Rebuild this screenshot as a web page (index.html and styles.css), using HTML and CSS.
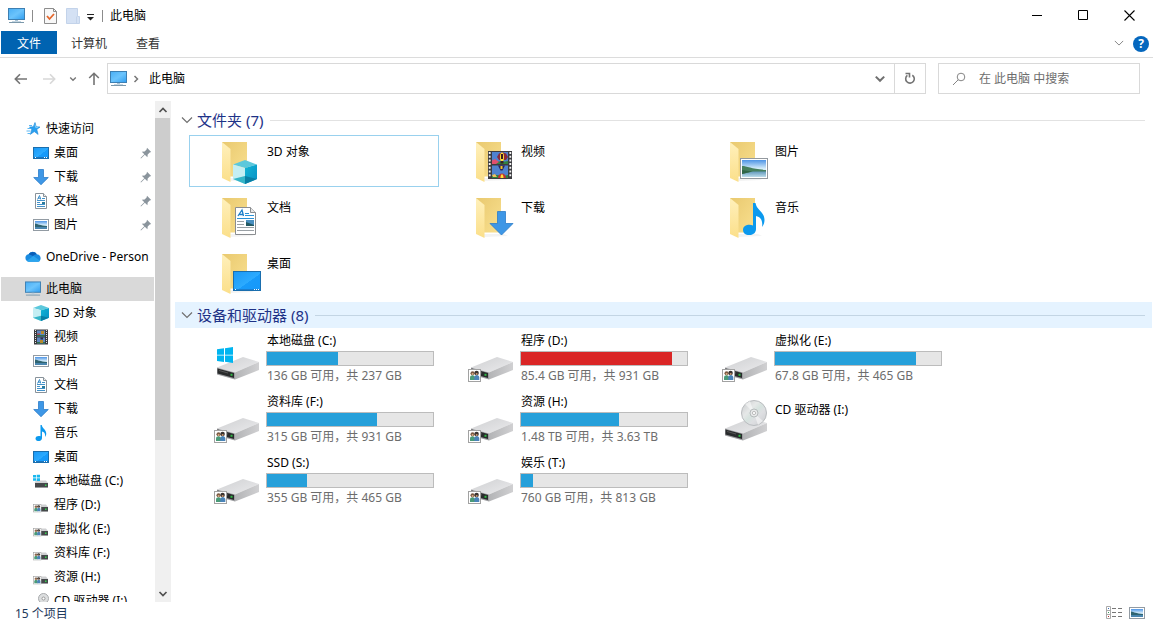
FILE: index.html
```html
<!DOCTYPE html>
<html lang="zh-CN">
<head>
<meta charset="utf-8">
<title>此电脑</title>
<link rel="stylesheet" href="styles.css">
</head>
<body>
<svg class="sprite" aria-hidden="true">
  <defs>
    <linearGradient id="gScreen" x1="0" y1="0" x2="1" y2="1"><stop offset="0" stop-color="#48aef5"/><stop offset=".5" stop-color="#6cc4fc"/><stop offset="1" stop-color="#2f9df0"/></linearGradient>
    <linearGradient id="gDesk" x1="0" y1="0" x2="1" y2="1"><stop offset="0" stop-color="#1a98f5"/><stop offset=".55" stop-color="#2cabff"/><stop offset=".56" stop-color="#189bfa"/><stop offset="1" stop-color="#1598fa"/></linearGradient>
    <linearGradient id="gBack" x1="0" y1="0" x2="1" y2="1"><stop offset="0" stop-color="#e9c96f"/><stop offset="1" stop-color="#f9e090"/></linearGradient>
    <linearGradient id="gFlap" x1="0" y1="0" x2="0" y2="1"><stop offset="0" stop-color="#fff0bb"/><stop offset="1" stop-color="#fbdf8a"/></linearGradient>
    <linearGradient id="gTop" x1="0" y1="0" x2="1" y2="1"><stop offset="0" stop-color="#cfd0d2"/><stop offset="1" stop-color="#ebebed"/></linearGradient>
    <linearGradient id="gSide" x1="0" y1="0" x2="1" y2="0"><stop offset="0" stop-color="#b3b4b6"/><stop offset="1" stop-color="#d0d0d2"/></linearGradient>
    <linearGradient id="gDisc" x1="0" y1="0" x2="1" y2="1"><stop offset="0" stop-color="#c6c8ca"/><stop offset=".35" stop-color="#e6e8e8"/><stop offset=".5" stop-color="#d6e2de"/><stop offset=".65" stop-color="#dedfe2"/><stop offset="1" stop-color="#c8cacd"/></linearGradient>
    <linearGradient id="gSky" x1="0" y1="0" x2="0" y2="1"><stop offset="0" stop-color="#4d94e6"/><stop offset=".5" stop-color="#d4ecfa"/><stop offset="1" stop-color="#e6f3f8"/></linearGradient>
    <linearGradient id="gWater" x1="0" y1="0" x2="0" y2="1"><stop offset="0" stop-color="#5a93b8"/><stop offset="1" stop-color="#bcdcea"/></linearGradient>
    <linearGradient id="gCubeR" x1="0" y1="0" x2="1" y2="1"><stop offset="0" stop-color="#12b5d5"/><stop offset="1" stop-color="#078fc4"/></linearGradient>
  </defs>

  <symbol id="pc" viewBox="0 0 17 16"><rect x=".5" y=".5" width="16" height="11" fill="url(#gScreen)" stroke="#3d7fb2"/><path d="M7 12h3v1H7z" fill="#a9c3d6"/><path d="M4 13h9v1H4z" fill="#c4d6e2"/><path d="M1 14.500h15" stroke="#7b98ab"/></symbol>
  <symbol id="star" viewBox="0 0 16 16"><path d="M10 1.500l1.200 4.300 3.800.2-3.200 2.400 1.300 5-3.800-2.800-4 2.800 1.500-4.700L4.500 6l3.800-.2z" fill="#2aa0f0" stroke="#1b86d6" stroke-width=".6"/><path d="M2.500 7.500h4M1.500 10h4M2.500 12.500h3M4 4.500h3" stroke="#4ab0f3" stroke-width=".9"/><path d="M10 3.500l.7 3 2.500.2" fill="none" stroke="#7fd0fb"/></symbol>
  <symbol id="desk" viewBox="0 0 16 16"><rect x=".5" y="2.500" width="15" height="11" fill="url(#gDesk)" stroke="#1a6eae"/><path d="M1 12.500h14" stroke="#1b75bd"/><path d="M2 12.500h1M11 12.500h1M13 12.500h1" stroke="#fff"/></symbol>
  <symbol id="down" viewBox="0 0 16 16"><path d="M5.500.5h5v8h4.800L8 15.700.7 8.500h4.800z" fill="#3e97e6" stroke="#2c7cc9" stroke-width=".8"/></symbol>
  <symbol id="doc" viewBox="0 0 16 16"><path d="M2.500.5h8l3 3v12h-11z" fill="#fff" stroke="#88929a"/><path d="M10.500.5v3h3" fill="#eee" stroke="#88929a"/><path d="M4.500 6.500l2-4 1.200 4M5 5.200h3M4 7.500h8M9 5.500h3M4 9.500h3M9 9.500h3M4 11.500h8M4 13.500h8" fill="none" stroke="#2e86c4" stroke-width=".9"/><path d="M9 9h3v2H9z" fill="#2a7a9a"/></symbol>
  <symbol id="pic" viewBox="0 0 16 16"><rect x=".5" y="2.500" width="15" height="11" fill="#fff" stroke="#929ba3"/><path d="M2 4h12v8H2z" fill="url(#gSky)"/><path d="M2 6.500c3 .5 5 2 12 2.500v1H2z" fill="#2f6471"/><path d="M2 10h12v2H2z" fill="#4985ae"/></symbol>
  <symbol id="cloud" viewBox="0 0 17 16"><path d="M4 13a4 4 0 0 1-.3-7.900A5 5 0 0 1 12.500 5c3 .3 4.500 2.500 4 5s-2 3-3.500 3z" fill="#1a8be0"/><path d="M4 5a5 5 0 0 1 8.500 0c-2 0-3 1-4 2L4 5z" fill="#0a5eb8"/><path d="M2 12l7-5 7 5c-.6.700-1.500 1-3 1H4c-.8 0-1.500-.4-2-1z" fill="#2ba5ee"/></symbol>
  <symbol id="cube" viewBox="0 0 24 24"><path d="M12 0l12 4.500L12 8 0 4.500z" fill="#5cc8dc"/><path d="M0 4.500L12 8v16L0 19z" fill="#c4eef3"/><path d="M24 4.500L12 8v16l12-5z" fill="url(#gCubeR)"/><path d="M0 19l12-3v8z" fill="#35b5c8"/><path d="M24 19l-12-3v8z" fill="#087fa5"/></symbol>
  <symbol id="film" viewBox="0 0 24 28"><path d="M0 0h24v28H0z" fill="#3c3c40"/><path d="M1.700 1v26M22.300 1v26" stroke="#f4f4f4" stroke-width="1.800" stroke-dasharray="2 1.700"/><path d="M4 1h16v12H4zM4 14.500h16V27H4z" fill="#4f82cf"/><path d="M4 11c5-2 9 1 16-1v3H4zM4 24c5-1 11 2 16 0v3H4z" fill="#308240"/><path d="M9 6l2-3.500 3.500-1.200L18 2.500 20 6l-2 3h-7z" fill="#8a2a3c"/><ellipse cx="14" cy="6" rx="2" ry="4.500" fill="#ffe038"/><path d="M13 3h2v5h-2z" fill="#3b1d20"/><path d="M12.500 10h3v2.500h-3z" fill="#392023"/><path d="M4 9.500l3-1.500 4 3-3 2H4z" fill="#e0506f"/><path d="M10 14.500h7l-2.500 5h-2z" fill="#2c225b"/><path d="M12.500 15h2v3h-2z" fill="#f2c622"/><path d="M10 27c0-6 8-6 8 0z" fill="#c23034"/><path d="M12.500 27c0-5 3-5 3 0z" fill="#ffe038"/><path d="M4 24l3-1 2 3H5z" fill="#f0c060"/></symbol>
  <symbol id="filmMini" viewBox="0 0 16 16"><path d="M1 .5h14v15H1z" fill="#3a3a3e"/><path d="M2.500 1v14M13.500 1v14" stroke="#e4e4e4" stroke-dasharray="1 1"/><path d="M4 1.500h8v6H4zM4 8.500h8v6H4z" fill="#5e86c0"/><path d="M4 6h8v1.500H4zM4 13h8v1.500H4z" fill="#2f6e50"/><path d="M8 2h3v3H8zM7 11h3v3H7z" fill="#b58a2b"/><path d="M4 4.500h3V6H4z" fill="#a84a50"/><path d="M7.500 8.500h2.500v2H7.500z" fill="#2d2c4e"/></symbol>
  <symbol id="music" viewBox="0 0 22 32"><path d="M10 0h2.500c1 7 9 9 9 17 0 3-1 5-2.500 7 1-6-1-10-6-11v13c0 8-13 8-13 1 0-5 6-6 10-4.500z" fill="#0b99ee"/></symbol>
  <symbol id="flag" viewBox="0 0 16 16"><path d="M0 2.300l7-1v6.400H0zM8 1.200L16 0v7.700H8zM0 8.600h7V15l-7-1zM8 8.600h8V16l-8-1.200z" fill="#00b5f0"/></symbol>
  <symbol id="people" viewBox="0 0 13 13"><rect x=".5" y=".5" width="12" height="12" fill="#fff" stroke="#a2a2a2"/><circle cx="4.600" cy="4.300" r="2.100" fill="#7a5a42"/><circle cx="8.600" cy="4" r="2.200" fill="#3a3330"/><circle cx="4.600" cy="5" r="1" fill="#d9ac88"/><circle cx="8.700" cy="5" r="1" fill="#c9966f"/><path d="M2 11V8.500c0-3 5-3 5 0V11z" fill="#4a9a78"/><path d="M6.300 11V8.500c0-3.500 5-3.500 5 0V11z" fill="#4a83b8"/></symbol>
  <symbol id="box" viewBox="0 0 48 48"><path d="M2 32.500L28 22l16 5-24 10.500z" fill="url(#gTop)"/><path d="M20 37.500L44 27v8L20 44.500z" fill="url(#gSide)"/><path d="M2 32.500l18 5v7L2 39.500z" fill="#9c9da0"/><path d="M2.500 33.500l16.500 4.600V43L2.500 38.400z" fill="#292b2c"/><path d="M4 35l9 2.400v1L4 36z" fill="#555"/><path d="M15.500 38.800h2v2h-2z" fill="#2fb944"/></symbol>
  <symbol id="mini" viewBox="0 0 16 16"><path d="M3 7.500h10l2 2.500H1.500z" fill="#cfd0d2"/><path d="M2 10h13v4H2z" fill="#45484a"/><path d="M2 14.500h13" stroke="#9a9c9e"/><path d="M12 11.500h1.500V13H12z" fill="#35d14f"/></symbol>

  <symbol id="miniC" viewBox="0 0 16 16"><use href="#mini" width="16" height="16"/><path d="M0 2h3v2.500H0zM3.700 1.700H7v2.800H3.700zM0 5.200h3v2.500H0zM3.700 5.200H7V8H3.700z" fill="#19b8ef"/></symbol>
  <symbol id="miniNet" viewBox="0 0 16 16"><use href="#mini" width="16" height="16"/><use href="#people" y="7" width="8.500" height="8.500"/></symbol>
  <symbol id="miniCd" viewBox="0 0 16 16"><use href="#mini" y="2" width="16" height="16"/><circle cx="10.500" cy="5.500" r="5" fill="#dcdedf" stroke="#a9abad"/><circle cx="10.500" cy="5.500" r="1.500" fill="#fff" stroke="#999"/></symbol>

  <symbol id="folder" viewBox="0 0 48 48"><path d="M15 44l-4-3h24l4 2z" fill="#f3f3f3"/><path d="M7 5h25v34.500H7z" fill="url(#gBack)"/><path d="M7 5l8.500 7v33L7 41z" fill="url(#gFlap)"/></symbol>
  <symbol id="f3d" viewBox="0 0 48 48"><use href="#folder" width="48" height="48"/><use href="#cube" x="18" y="23" width="24" height="24"/></symbol>
  <symbol id="fFilm" viewBox="0 0 48 48"><use href="#folder" width="48" height="48"/><use href="#film" x="19" y="14" width="24" height="28"/></symbol>
  <symbol id="fPic" viewBox="0 0 48 48"><use href="#folder" width="48" height="48"/><rect x="17.500" y="21.500" width="27" height="20" fill="#fff" stroke="#93999f"/><path d="M19 23h24v17H19z" fill="url(#gSky)"/><path d="M19 34h24v6H19z" fill="url(#gWater)"/><path d="M19 29c5 0 10 3 24 4v1.500H30L19 37z" fill="#46805f"/><path d="M19 33l10 1.500L19 37z" fill="#2f6547"/></symbol>
  <symbol id="fDoc" viewBox="0 0 48 48"><use href="#folder" width="48" height="48"/><path d="M20.500 14.500h15l5 5v22h-20z" fill="#fff" stroke="#8a8d90"/><path d="M35.500 14.500v5h5" fill="#e6e6e6" stroke="#8a8d90"/><path d="M23 23l4-6 1.500 6M24.500 21.500h4" fill="none" stroke="#1e7fc8" stroke-width="1.300"/><path d="M30 20.500h4M30 22.500h9M22 25.500h17" stroke="#2b92d6"/><path d="M22 28.500h7M22 31.500h7M22 34.500h17M22 37.500h17" stroke="#9aa0a5"/><path d="M31 27h8v6h-8z" fill="#4a8fc0"/><path d="M31 29l8 3v1h-8z" fill="#255a63"/></symbol>
  <symbol id="fDown" viewBox="0 0 48 48"><use href="#folder" width="48" height="48"/><path d="M28.500 18.500h8v12H44L32.500 42 21 30.500h7.500z" fill="#3e97e6" stroke="#2c7cc9" stroke-width=".8"/></symbol>
  <symbol id="fMusic" viewBox="0 0 48 48"><use href="#folder" width="48" height="48"/><use href="#music" x="20" y="10" width="22" height="32"/></symbol>
  <symbol id="fDesk" viewBox="0 0 48 48"><use href="#folder" width="48" height="48"/><rect x="18.500" y="22.500" width="27" height="19" fill="url(#gDesk)" stroke="#1a6eae"/><path d="M19 40.500h26" stroke="#1b7fd0"/><path d="M20 40.500h1M39 40.500h1M41 40.500h1M43 40.500h1" stroke="#fff"/></symbol>

  <symbol id="driveC" viewBox="0 0 48 48"><use href="#box" width="48" height="48"/><use href="#flag" x="2" y="12" width="16" height="16"/></symbol>
  <symbol id="driveNet" viewBox="-1 0 48 48"><use href="#box" width="48" height="48"/><use href="#people" x="-1" y="34" width="13" height="13"/></symbol>
  <symbol id="driveCd" viewBox="0 0 48 48"><use href="#box" width="48" height="48"/><circle cx="31" cy="17" r="12.500" fill="url(#gDisc)" stroke="#b9bcbf"/><path d="M31 17L22 8l5-3zM31 17l9 8-5 4z" fill="#fff" opacity=".5"/><circle cx="31" cy="17" r="4" fill="#e8eaea" stroke="#aaaeb0" stroke-width=".8"/><circle cx="31" cy="17" r="1.600" fill="#fff" stroke="#999" stroke-width=".6"/></symbol>

  <symbol id="pin" viewBox="0 0 12 12"><path d="M7 .8L11.200 5l-1.500.4-2 2-.3 2.800-2.600-2.500L1 11.500.5 11l3.800-3.800L1.800 4.700l2.800-.3 2-2z" fill="#8a949c"/></symbol>
  <symbol id="chevD" viewBox="0 0 12 12"><path d="M1 3.500l5 5 5-5" fill="none" stroke="currentColor" stroke-width="1.200"/></symbol>
  <symbol id="chevBold" viewBox="0 0 10 10"><path d="M1.500 3L5 6.500 8.500 3" fill="none" stroke="currentColor" stroke-width="1.700"/></symbol>
</svg>

<div class="window">
  <header class="titlebar">
    <svg class="i-pc" aria-hidden="true"><use href="#pc"/></svg>
    <span class="sep"></span>
    <button class="quick q-check" aria-label="属性"><svg width="13" height="16" viewBox="0 0 13 16"><path d="M.5.5h9l3 3v12H.5z" fill="#f8f8f8" stroke="#8d8d8d"/><path d="M9.500.5v3h3" fill="none" stroke="#8d8d8d"/><path d="M3 8l2.500 3 4.500-5" fill="none" stroke="#e4662b" stroke-width="1.800"/></svg></button>
    <button class="quick q-new" aria-label="新建文件夹"><svg width="14" height="16" viewBox="0 0 14 16"><path d="M.5.5h11v8h2v7H.5z" fill="#d4e1f4" stroke="#c3d3ea"/><path d="M10.500 8.500v7" stroke="#c3d3ea"/></svg></button>
    <button class="quick q-more" aria-label="自定义快速访问工具栏"><svg width="8" height="8" viewBox="0 0 8 8"><path d="M0 1.500h7" stroke="#222"/><path d="M0 4h7L3.500 7.500z" fill="#222"/></svg></button>
    <span class="sep"></span>
    <h1 class="title">此电脑</h1>
    <div class="controls">
      <button class="control" aria-label="最小化"><svg width="11" height="11" viewBox="0 0 11 11"><path d="M0 5.500h10" stroke="#000"/></svg></button>
      <button class="control" aria-label="最大化"><svg width="11" height="11" viewBox="0 0 11 11"><path d="M.5.5h9v9h-9z" fill="none" stroke="#000"/></svg></button>
      <button class="control" aria-label="关闭"><svg width="11" height="11" viewBox="0 0 11 11"><path d="M.5.5l10 10M10.500.5l-10 10" stroke="#000" stroke-width="1.100"/></svg></button>
    </div>
  </header>

  <nav class="ribbon">
    <button class="tab tab-file">文件</button>
    <button class="tab">计算机</button>
    <button class="tab">查看</button>
    <button class="expand" aria-label="展开功能区"><svg width="10" height="10"><use href="#chevD"/></svg></button>
    <button class="help" aria-label="帮助">?</button>
  </nav>

  <div class="addressbar">
    <div class="history">
      <button class="nav-btn" aria-label="后退"><svg width="13" height="12" viewBox="0 0 13 12"><path d="M13 6H1.500M6 1.200L1.300 6 6 10.800" fill="none" stroke="#747474" stroke-width="1.600"/></svg></button>
      <button class="nav-btn" aria-label="前进"><svg width="13" height="12" viewBox="0 0 13 12"><path d="M0 6h11.500M7 1.200L11.700 6 7 10.800" fill="none" stroke="#d8d8d8" stroke-width="1.600"/></svg></button>
      <button class="nav-btn nav-small" aria-label="最近浏览的位置"><svg width="8" height="8"><use href="#chevBold"/></svg></button>
      <button class="nav-btn nav-up" aria-label="向上"><svg width="12" height="13" viewBox="0 0 12 13"><path d="M6 13V1.500M1.200 6L6 1.300 10.800 6" fill="none" stroke="#747474" stroke-width="1.600"/></svg></button>
    </div>
    <div class="path">
      <svg class="i-pc" aria-hidden="true"><use href="#pc"/></svg>
      <svg class="crumb-arrow" width="6" height="8" viewBox="0 0 6 8" aria-hidden="true"><path d="M1.500 1l3 3-3 3" fill="none" stroke="#777" stroke-width="1.500"/></svg>
      <a class="crumb" href="#">此电脑</a>
      <button class="path-drop" aria-label="以前的位置"><svg width="12" height="12"><use href="#chevBold"/></svg></button>
      <button class="refresh" aria-label="刷新"><svg width="12" height="13" viewBox="0 0 12 13"><path d="M8.300 3.200a4.300 4.300 0 1 1-4.900.2" fill="none" stroke="#747474" stroke-width="1.600"/><path d="M1.500 1.500h4v4" fill="none" stroke="#747474" stroke-width="1.600"/></svg></button>
    </div>
    <label class="search">
      <svg width="14" height="14" viewBox="0 0 14 14" aria-hidden="true"><circle cx="9" cy="5" r="3.800" fill="none" stroke="#858585"/><path d="M6.200 7.800L1 13" stroke="#858585"/></svg>
      <input type="text" placeholder="在 此电脑 中搜索" aria-label="在 此电脑 中搜索">
    </label>
  </div>

  <div class="body">
    <nav class="tree">
      <ul class="branch">
        <li><a class="node" href="#"><svg class="ico"><use href="#star"/></svg>快速访问</a></li>
        <li><a class="node sub" href="#"><svg class="ico"><use href="#desk"/></svg>桌面<svg class="pin"><use href="#pin"/></svg></a></li>
        <li><a class="node sub" href="#"><svg class="ico"><use href="#down"/></svg>下载<svg class="pin"><use href="#pin"/></svg></a></li>
        <li><a class="node sub" href="#"><svg class="ico"><use href="#doc"/></svg>文档<svg class="pin"><use href="#pin"/></svg></a></li>
        <li><a class="node sub" href="#"><svg class="ico"><use href="#pic"/></svg>图片<svg class="pin"><use href="#pin"/></svg></a></li>
      </ul>
      <ul class="branch">
        <li><a class="node" href="#"><svg class="ico"><use href="#cloud"/></svg>OneDrive - Person</a></li>
      </ul>
      <ul class="branch">
        <li><a class="node selected" href="#"><svg class="ico"><use href="#pc"/></svg>此电脑</a></li>
        <li><a class="node sub" href="#"><svg class="ico"><use href="#cube"/></svg>3D 对象</a></li>
        <li><a class="node sub" href="#"><svg class="ico"><use href="#filmMini"/></svg>视频</a></li>
        <li><a class="node sub" href="#"><svg class="ico"><use href="#pic"/></svg>图片</a></li>
        <li><a class="node sub" href="#"><svg class="ico"><use href="#doc"/></svg>文档</a></li>
        <li><a class="node sub" href="#"><svg class="ico"><use href="#down"/></svg>下载</a></li>
        <li><a class="node sub" href="#"><svg class="ico"><use href="#music"/></svg>音乐</a></li>
        <li><a class="node sub" href="#"><svg class="ico"><use href="#desk"/></svg>桌面</a></li>
        <li><a class="node sub" href="#"><svg class="ico"><use href="#miniC"/></svg>本地磁盘 (C:)</a></li>
        <li><a class="node sub" href="#"><svg class="ico"><use href="#miniNet"/></svg>程序 (D:)</a></li>
        <li><a class="node sub" href="#"><svg class="ico"><use href="#miniNet"/></svg>虚拟化 (E:)</a></li>
        <li><a class="node sub" href="#"><svg class="ico"><use href="#miniNet"/></svg>资料库 (F:)</a></li>
        <li><a class="node sub" href="#"><svg class="ico"><use href="#miniNet"/></svg>资源 (H:)</a></li>
        <li><a class="node sub" href="#"><svg class="ico"><use href="#miniCd"/></svg>CD 驱动器 (I:)</a></li>
      </ul>
    </nav>
    <div class="scroll">
      <button class="scroll-btn scroll-up" aria-label="向上滚动"><svg width="10" height="10"><use href="#chevBold"/></svg></button>
      <div class="track"><div class="thumb"></div></div>
      <button class="scroll-btn" aria-label="向下滚动"><svg width="10" height="10"><use href="#chevBold"/></svg></button>
    </div>

    <main class="content">
      <section>
        <h2 class="group"><svg width="12" height="12"><use href="#chevD"/></svg>文件夹 (7)</h2>
        <div class="grid folders">
          <a class="item focused" href="#"><svg class="big"><use href="#f3d"/></svg><span class="name">3D 对象</span></a>
          <a class="item" href="#"><svg class="big"><use href="#fFilm"/></svg><span class="name">视频</span></a>
          <a class="item" href="#"><svg class="big"><use href="#fPic"/></svg><span class="name">图片</span></a>
          <a class="item" href="#"><svg class="big"><use href="#fDoc"/></svg><span class="name">文档</span></a>
          <a class="item" href="#"><svg class="big"><use href="#fDown"/></svg><span class="name">下载</span></a>
          <a class="item" href="#"><svg class="big"><use href="#fMusic"/></svg><span class="name">音乐</span></a>
          <a class="item" href="#"><svg class="big"><use href="#fDesk"/></svg><span class="name">桌面</span></a>
        </div>
      </section>
      <section>
        <h2 class="group hover"><svg width="12" height="12"><use href="#chevD"/></svg>设备和驱动器 (8)</h2>
        <div class="grid drives">
          <a class="item" href="#"><svg class="big"><use href="#driveC"/></svg><span class="info"><span>本地磁盘 (C:)</span><span class="bar"><span class="fill" style="width:43%"></span></span><span class="space">136 GB 可用，共 237 GB</span></span></a>
          <a class="item" href="#"><svg class="big net"><use href="#driveNet"/></svg><span class="info"><span>程序 (D:)</span><span class="bar"><span class="fill full" style="width:91%"></span></span><span class="space">85.4 GB 可用，共 931 GB</span></span></a>
          <a class="item" href="#"><svg class="big net"><use href="#driveNet"/></svg><span class="info"><span>虚拟化 (E:)</span><span class="bar"><span class="fill" style="width:85%"></span></span><span class="space">67.8 GB 可用，共 465 GB</span></span></a>
          <a class="item" href="#"><svg class="big net"><use href="#driveNet"/></svg><span class="info"><span>资料库 (F:)</span><span class="bar"><span class="fill" style="width:66%"></span></span><span class="space">315 GB 可用，共 931 GB</span></span></a>
          <a class="item" href="#"><svg class="big net"><use href="#driveNet"/></svg><span class="info"><span>资源 (H:)</span><span class="bar"><span class="fill" style="width:59%"></span></span><span class="space">1.48 TB 可用，共 3.63 TB</span></span></a>
          <a class="item" href="#"><svg class="big"><use href="#driveCd"/></svg><span class="name">CD 驱动器 (I:)</span></a>
          <a class="item" href="#"><svg class="big net"><use href="#driveNet"/></svg><span class="info"><span>SSD (S:)</span><span class="bar"><span class="fill" style="width:24%"></span></span><span class="space">355 GB 可用，共 465 GB</span></span></a>
          <a class="item" href="#"><svg class="big net"><use href="#driveNet"/></svg><span class="info"><span>娱乐 (T:)</span><span class="bar"><span class="fill" style="width:7%"></span></span><span class="space">760 GB 可用，共 813 GB</span></span></a>
        </div>
      </section>
    </main>
  </div>

  <footer class="status">
    <span>15 个项目</span>
    <div class="views">
      <button class="view" aria-label="详细信息"><svg width="17" height="14" viewBox="0 0 17 14"><path d="M.5.5h4v12h-4zM.5 4.500h4M.5 8.500h4" fill="none" stroke="#aaa"/><path d="M2 2.500h1" stroke="#3a6bb5"/><path d="M2 6.500h1" stroke="#3a9a5b"/><path d="M2 10.500h1" stroke="#b52c2c"/><path d="M6 2.500h4M12 2.500h4M6 6.500h4M12 6.500h4M6 10.500h4M12 10.500h4" stroke="#777"/></svg></button>
      <button class="view" aria-label="大图标"><svg width="16" height="16"><use href="#pic"/></svg></button>
    </div>
  </footer>
</div>
</body>
</html>
```
FILE: styles.css
```css
* { box-sizing: border-box; }

body {
  margin: 0;
  background: #fff;
  color: #000;
  font: 12px/16px "Noto Sans", "Noto Sans CJK SC", sans-serif;
}

button {
  display: flex;
  align-items: center;
  justify-content: center;
  margin: 0;
  padding: 0;
  border: 0;
  background: none;
  color: inherit;
  font: inherit;
}

a { color: inherit; text-decoration: none; }
ul { margin: 0; padding: 0; list-style: none; }
h1, h2 { margin: 0; font-weight: 400; }
svg { display: block; flex: none; }
.sprite { position: absolute; width: 0; height: 0; }

.window { display: flex; flex-direction: column; height: 100vh; }

/* title bar */
.titlebar { display: flex; align-items: center; height: 31px; padding: 0 1px 0 8px; }
.i-pc { width: 17px; height: 16px; }
.sep { width: 1px; height: 12px; margin-left: 7px; background: #8c8c8c; }
.quick { height: 24px; }
.q-check { margin-left: 11px; }
.q-new { margin-left: 9px; }
.q-more { margin: 2px 0 0 7px; }
.title { margin-left: 7px; font-size: 12px; }
.controls { display: flex; align-self: stretch; margin-left: auto; }
.control { width: 46px; }

/* ribbon tabs */
.ribbon {
  display: flex;
  align-items: center;
  height: 27px;
  padding: 0 4px 3px 1px;
  border-bottom: 1px solid #dcdcdc;
}
.tab { height: 23px; padding: 2px 14px 0; margin-right: 1px; color: #333; }
.tab-file { width: 56px; margin-right: 0; background: #0063b1; color: #fff; }
.expand { margin-left: auto; color: #888; }
.help {
  width: 16px;
  height: 16px;
  margin: 3px 0 0 9px;
  border-radius: 50%;
  background: #0567be;
  color: #fff;
  font-weight: 700;
}

/* address bar */
.addressbar { display: flex; align-items: center; padding: 5px 13px 7px 0; }
.history { display: flex; align-items: center; width: 107px; padding-left: 6px; color: #777; }
.nav-btn { width: 29px; height: 24px; }
.nav-small { width: 18px; }
.nav-up { width: 24px; }
.path {
  display: flex;
  align-items: center;
  flex: 1;
  height: 31px;
  padding-left: 2px;
  border: 1px solid #d9d9d9;
}
.crumb-arrow { margin: 0 10px 0 6px; }
.path-drop { width: 28px; height: 29px; margin-left: auto; color: #707070; }
.refresh { width: 31px; height: 29px; border-left: 1px solid #d9d9d9; }
.search {
  display: flex;
  align-items: center;
  gap: 13px;
  width: 202px;
  height: 31px;
  margin-left: 12px;
  padding: 0 13px;
  border: 1px solid #d9d9d9;
}
.search input { flex: 1; min-width: 0; padding: 0; border: 0; outline: 0; background: none; font: inherit; }
.search input::placeholder { color: #6d6d6d; opacity: 1; }

/* navigation tree */
.body { display: flex; flex: 1; min-height: 0; }
.tree { width: 155px; padding: 16px 1px 0; overflow: hidden; }
.branch { margin-bottom: 8px; }
.node { display: flex; align-items: center; gap: 5px; height: 24px; padding-left: 24px; white-space: nowrap; }
.sub { padding-left: 32px; }
.selected { background: #d9d9d9; }
.ico { width: 16px; height: 16px; }
.pin { width: 12px; height: 12px; margin: 0 2px 0 auto; }

.scroll { display: flex; flex-direction: column; width: 16px; padding-right: 1px; background: #f0f0f0; color: #505050; }
.scroll-btn { height: 17px; }
.scroll-up svg { transform: rotate(180deg); }
.track { flex: 1; }
.thumb { height: 69%; background: #cdcdcd; }

/* content pane */
.content { flex: 1; min-width: 0; padding: 6px 1px 0 4px; overflow: hidden; }
.group {
  display: flex;
  align-items: center;
  height: 26px;
  padding: 0 7px 0 6px;
  color: #1e3287;
  font-size: 15px;
  line-height: 20px;
}
.group svg { margin-right: 4px; color: #707070; }
.group::after { content: ""; flex: 1; height: 1px; margin-left: 7px; background: #e2e2e2; }
.hover { background: #e5f3ff; }
.hover::after { background: #c3d5e4; }

.grid { display: grid; grid-template-columns: repeat(auto-fill, 250px); column-gap: 4px; padding-left: 14px; }
.folders { row-gap: 4px; padding-top: 2px; padding-bottom: 3px; }
.drives { row-gap: 9px; padding-top: 5px; }
.item { display: flex; gap: 4px; height: 52px; padding: 1px 0 0 25px; border: 1px solid transparent; }
.focused { border-color: #99d1ee; }
.big { width: 48px; height: 48px; }
.net { margin-left: -1px; margin-right: 1px; }
.name { padding-top: 7px; }
.drives .item { padding: 0 0 0 26px; border: 0; }
.drives .big { margin-top: 2px; }
.drives .name { padding: 8px 0 0; }
.info { display: flex; flex-direction: column; width: 168px; margin-left: -1px; }
.info > span { padding-left: 1px; }
.info .bar { height: 15px; margin: 2px 0; padding: 0; border: 1px solid #bcbcbc; background: #e6e6e6; }
.fill { display: block; height: 100%; background: #26a0da; }
.full { background: #da2626; }
.space { color: #6d6d6d; }

/* status bar */
.status { display: flex; align-items: center; height: 24px; padding: 0 8px 0 15px; color: #1e395b; }
.views { display: flex; align-items: center; gap: 6px; margin: 0 0 2px auto; }
```
